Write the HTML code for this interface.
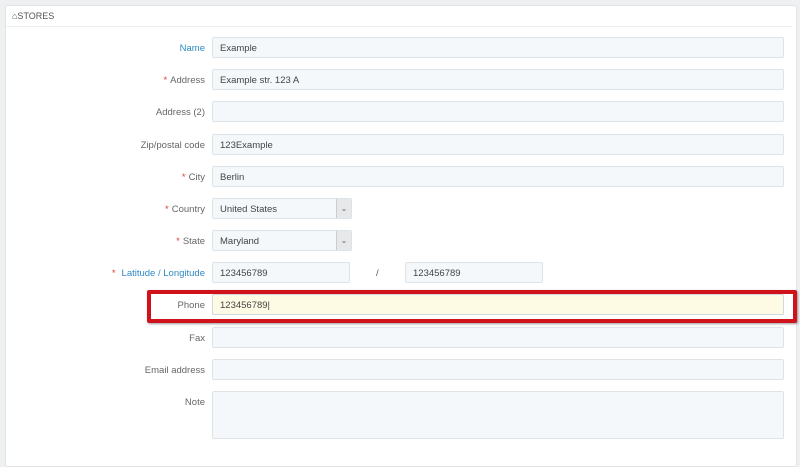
<!DOCTYPE html>
<html><head><style>
body{margin:0;width:800px;height:450px;background:#eef0f1;font-family:"Liberation Sans",sans-serif;font-size:9.5px;color:#555;overflow:hidden;position:relative}
.panel{position:absolute;left:5px;top:5px;width:790px;height:460px;background:#fff;border:1px solid #e1e4e6;border-radius:3px}
.hd{position:absolute;left:6px;top:6px;height:20px;width:780px;border-bottom:1px solid #eef0f1;font-size:9px;color:#555;line-height:20px;padding-left:6px}
.lbl{position:absolute;right:595px;text-align:right;white-space:nowrap;color:#666}
.lbl .s{color:#e03b3b;margin-right:3px}
.blue{color:#2e89c4}
.in{position:absolute;left:212px;width:570px;height:21px;background:#f4f8fa;border:1px solid #dde3e6;border-radius:2px;line-height:21px;padding-left:7px;box-sizing:border-box;width:572px;color:#444}
.sel .b{position:absolute;right:0;top:0;width:14px;height:19px;background:#e6e8e9;border-left:1px solid #ccc;font-size:8px;text-align:center;line-height:19px;color:#666}
</style></head><body>
<div class="panel"></div>
<div class="hd">&#8962;STORES</div>

<div class="lbl blue" style="top:43px">Name</div><div class="in" style="top:37px">Example</div>
<div class="lbl" style="top:75px"><span class="s">*</span>Address</div><div class="in" style="top:69px">Example str. 123 A</div>
<div class="lbl" style="top:107px">Address (2)</div><div class="in" style="top:101px"></div>
<div class="lbl" style="top:140px">Zip/postal code</div><div class="in" style="top:134px">123Example</div>
<div class="lbl" style="top:172px"><span class="s">*</span>City</div><div class="in" style="top:166px">Berlin</div>
<div class="lbl" style="top:204px"><span class="s">*</span>Country</div><div class="in sel" style="top:198px;width:140px">United States<span class="b">&#8964;</span></div>
<div class="lbl" style="top:236px"><span class="s">*</span>State</div><div class="in sel" style="top:230px;width:140px">Maryland<span class="b">&#8964;</span></div>
<div class="lbl" style="top:268px"><span class="s" style="margin-right:6px">*</span><span class="blue">Latitude / Longitude</span></div>
<div class="in" style="top:262px;width:138px">123456789</div>
<div style="position:absolute;left:376px;top:268px">/</div>
<div class="in" style="top:262px;left:405px;width:138px">123456789</div>
<div class="lbl" style="top:300px">Phone</div><div class="in" style="top:294px;background:#fefbe4;border-color:#cfd8dc">123456789|</div>
<div style="position:absolute;left:147px;top:290px;width:650px;height:33px;border:4px solid #d0121a;box-sizing:border-box;border-radius:2px;box-shadow:1px 1px 2px rgba(0,0,0,.4)"></div>
<div class="lbl" style="top:333px">Fax</div><div class="in" style="top:327px"></div>
<div class="lbl" style="top:365px">Email address</div><div class="in" style="top:359px"></div>
<div class="lbl" style="top:397px">Note</div><div class="in" style="top:391px;height:48px"></div>
</body></html>
